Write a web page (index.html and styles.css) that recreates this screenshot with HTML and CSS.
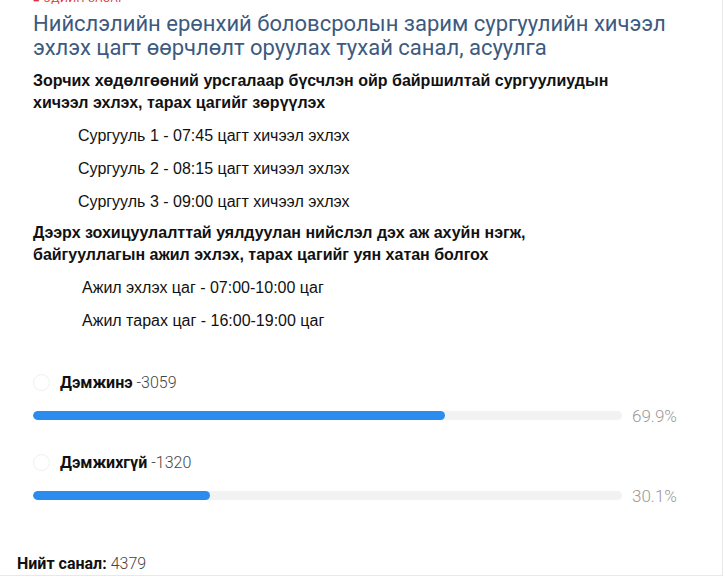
FILE: index.html
```html
<!DOCTYPE html>
<html>
<head>
<meta charset="utf-8">
<link rel="stylesheet" href="styles.css">
</head>
<body>
<div class="card">
  <div class="content">
    <div class="tag">■ ЭДИЙН ЗАСАГ</div>
    <h1 class="title">Нийслэлийн ерөнхий боловсролын зарим сургуулийн хичээл эхлэх цагт өөрчлөлт оруулах тухай санал, асуулга</h1>
    <p class="lead">Зорчих хөдөлгөөний урсгалаар бүсчлэн ойр байршилтай сургуулиудын хичээл эхлэх, тарах цагийг зөрүүлэх</p>
    <ul class="items">
      <li>Сургууль 1 - 07:45 цагт хичээл эхлэх</li>
      <li>Сургууль 2 - 08:15 цагт хичээл эхлэх</li>
      <li>Сургууль 3 - 09:00 цагт хичээл эхлэх</li>
    </ul>
    <p class="lead lead2">Дээрх зохицуулалттай уялдуулан нийслэл дэх аж ахуйн нэгж, байгууллагын ажил эхлэх, тарах цагийг уян хатан болгох</p>
    <ul class="items items2">
      <li>Ажил эхлэх цаг - 07:00-10:00 цаг</li>
      <li>Ажил тарах цаг - 16:00-19:00 цаг</li>
    </ul>
    <div class="poll">
      <div class="option">
        <div class="opt-head"><span class="radio"></span><b>Дэмжинэ</b><span class="count">-3059</span></div>
        <div class="bar-row"><div class="track"><div class="fill" style="width:69.9%"></div></div><span class="pct">69.9%</span></div>
      </div>
      <div class="option">
        <div class="opt-head"><span class="radio"></span><b>Дэмжихгүй</b><span class="count">-1320</span></div>
        <div class="bar-row"><div class="track"><div class="fill" style="width:30.1%"></div></div><span class="pct">30.1%</span></div>
      </div>
    </div>
  </div>
  <div class="total"><b>Нийт санал:</b><span class="count">4379</span></div>
</div>
</body>
</html>
```
FILE: styles.css
```css
html, body { margin: 0; padding: 0; background: #fff; }
body { font-family: "Liberation Sans", Arial, sans-serif; color: #111; }
.card {
  width: 723px;
  height: 576px;
  border-right: 1px solid #e8e8e8;
  border-bottom: 1px solid #e8e8e8;
  box-sizing: border-box;
  display: flex;
  flex-direction: column;
  overflow: hidden;
}
.content { padding: 0 0 0 33px; flex: 1; }
.tag {
  font-family: Roboto, sans-serif;
  font-size: 11px;
  color: #d9363e;
  line-height: 12px;
  height: 12px;
  margin-top: -7px;
  margin-bottom: 7px;
  letter-spacing: 0.5px;
}
.title {
  font-family: Roboto, sans-serif;
  font-weight: 400;
  font-size: 22px;
  line-height: 24px;
  color: #3d5a80;
  margin: 0;
  width: 680px;
}
.lead {
  font-weight: 700;
  font-size: 16px;
  line-height: 22px;
  margin: 10px 0 0 0;
  width: 595px;
}
.lead2 { margin-top: 4.5px; }
.items { list-style: none; margin: 4.5px 0 0 0; padding: 0 0 0 45px; }
.items li { font-size: 16px; line-height: 33px; }
.items2 { padding-left: 49px; }
.poll { margin-top: 36.5px; width: 690px; }
.option + .option { margin-top: 27.5px; }
.opt-head { display: flex; align-items: center; height: 18px; font-family: Roboto, sans-serif; font-size: 16px; }
.opt-head b { font-weight: 700; color: #111; margin-left: 10px; }
.radio { width: 17px; height: 17px; border: 1px solid #f0f0f0; border-radius: 50%; box-sizing: border-box; }
.count { color: #444; font-family: Roboto, sans-serif; font-weight: 300; margin-left: 4px; }
.bar-row { display: flex; align-items: center; margin-top: 14.5px; height: 20px; }
.track { width: 589px; height: 9px; background: #f2f2f2; border-radius: 5px; overflow: hidden; }
.fill { height: 100%; background: #2b8cf0; border-radius: 5px; }
.pct { margin-left: 10px; font-family: Roboto, sans-serif; font-weight: 300; font-size: 17px; color: #999; line-height: 20px; }
.total { padding: 0 0 1px 17px; font-family: Roboto, sans-serif; font-size: 16px; line-height: 20px; }
.total b { font-weight: 700; }
.total .count { margin-left: 4px; }
```
